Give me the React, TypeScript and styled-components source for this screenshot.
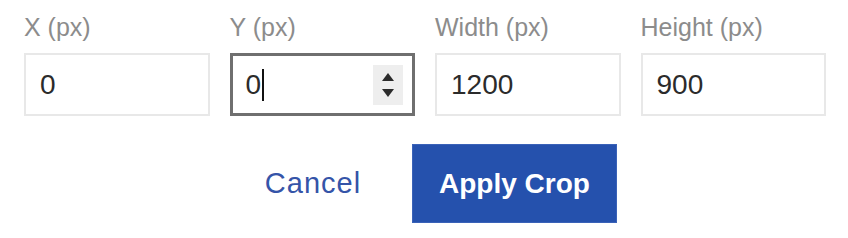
import React from 'react';
import styled, { createGlobalStyle } from 'styled-components';

const GlobalStyle = createGlobalStyle`
  html, body {
    margin: 0;
    padding: 0;
    background: #ffffff;
  }
  body {
    font-family: 'Liberation Sans', Arial, sans-serif;
  }
`;

const Panel = styled.div`
  width: 802px;
  padding: 12px 0 0 24px;
`;

const FieldRow = styled.div`
  display: grid;
  grid-template-columns: repeat(4, 1fr);
  column-gap: 20px;
`;

const Field = styled.div`
  display: flex;
  flex-direction: column;
`;

const Label = styled.label`
  font-size: 25px;
  line-height: 30px;
  color: #8c8c8c;
  margin-bottom: 11px;
`;

const InputBox = styled.div<{ $focused?: boolean }>`
  height: 63px;
  box-sizing: border-box;
  display: flex;
  align-items: center;
  padding: 0 9px 0 14px;
  border: ${p => (p.$focused ? '3px solid #6f6f6f' : '2px solid #e8e8e8')};
  padding-left: ${p => (p.$focused ? '13px' : '14px')};
  font-size: 28px;
  color: #2b2b2b;
`;

const Value = styled.span`
  flex: 1;
  display: flex;
  align-items: center;
`;

const Caret = styled.span`
  display: inline-block;
  width: 2px;
  height: 32px;
  background: #111;
  margin-left: 1px;
`;

const Spinner = styled.div`
  width: 30px;
  height: 40px;
  background: #eeeeee;
  display: flex;
  flex-direction: column;
  align-items: center;
  justify-content: center;
  gap: 8px;
`;

const Actions = styled.div`
  display: flex;
  justify-content: center;
  gap: 19px;
  margin-top: 28px;
`;

const Button = styled.button<{ $primary?: boolean }>`
  height: 79px;
  box-sizing: border-box;
  width: ${p => (p.$primary ? '205px' : '160px')};
  padding: 0;
  font-family: 'Liberation Sans', Arial, sans-serif;
  font-size: ${p => (p.$primary ? '28px' : '29px')};
  letter-spacing: ${p => (p.$primary ? '0' : '1px')};
  font-weight: ${p => (p.$primary ? 700 : 400)};
  color: ${p => (p.$primary ? '#ffffff' : '#3554a8')};
  background: ${p => (p.$primary ? '#2551ad' : 'transparent')};
  border: ${p => (p.$primary ? '1px solid #3a62b8' : 'none')};
  cursor: pointer;
`;

const fields = [
  { label: 'X (px)', value: '0' },
  { label: 'Y (px)', value: '0', focused: true },
  { label: 'Width (px)', value: '1200' },
  { label: 'Height (px)', value: '900' },
];

export default function App() {
  return (
    <>
      <GlobalStyle />
      <Panel>
        <FieldRow>
          {fields.map(f => (
            <Field key={f.label}>
              <Label>{f.label}</Label>
              <InputBox $focused={f.focused}>
                <Value>
                  {f.value}
                  {f.focused && <Caret />}
                </Value>
                {f.focused && (
                  <Spinner>
                    <svg width="12" height="8" viewBox="0 0 12 8">
                      <path d="M6 0 L12 8 L0 8 Z" fill="#2b2b2b" />
                    </svg>
                    <svg width="12" height="8" viewBox="0 0 12 8">
                      <path d="M0 0 L12 0 L6 8 Z" fill="#2b2b2b" />
                    </svg>
                  </Spinner>
                )}
              </InputBox>
            </Field>
          ))}
        </FieldRow>
        <Actions>
          <Button>Cancel</Button>
          <Button $primary>Apply Crop</Button>
        </Actions>
      </Panel>
    </>
  );
}
